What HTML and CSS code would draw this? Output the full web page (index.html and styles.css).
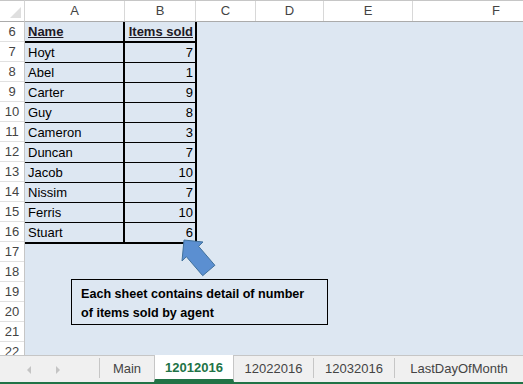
FILE: index.html
```html
<!DOCTYPE html>
<html lang="en">
<head>
  <meta charset="UTF-8">
  <title>12012016 - Items sold</title>
  <link rel="stylesheet" href="styles.css">
</head>
<body>
  <div class="sheet">
    <div class="grid">
      <div class="corner"><span class="corner-tri"></span></div>

      <div class="col-heads">
        <div class="ch col-a">A</div>
        <div class="ch col-b">B</div>
        <div class="ch col-c">C</div>
        <div class="ch col-d">D</div>
        <div class="ch col-e">E</div>
        <div class="ch col-f">F</div>
      </div>

      <div class="row-heads">
        <div class="rh">6</div>
        <div class="rh">7</div>
        <div class="rh">8</div>
        <div class="rh">9</div>
        <div class="rh">10</div>
        <div class="rh">11</div>
        <div class="rh">12</div>
        <div class="rh">13</div>
        <div class="rh">14</div>
        <div class="rh">15</div>
        <div class="rh">16</div>
        <div class="rh">17</div>
        <div class="rh">18</div>
        <div class="rh">19</div>
        <div class="rh">20</div>
        <div class="rh">21</div>
        <div class="rh">22</div>
      </div>

      <div class="cells">
        <div class="data">
          <div class="dr head"><div class="ca">Name</div><div class="cb">Items sold</div></div>
          <div class="dr"><div class="ca">Hoyt</div><div class="cb">7</div></div>
          <div class="dr"><div class="ca">Abel</div><div class="cb">1</div></div>
          <div class="dr"><div class="ca">Carter</div><div class="cb">9</div></div>
          <div class="dr"><div class="ca">Guy</div><div class="cb">8</div></div>
          <div class="dr"><div class="ca">Cameron</div><div class="cb">3</div></div>
          <div class="dr"><div class="ca">Duncan</div><div class="cb">7</div></div>
          <div class="dr"><div class="ca">Jacob</div><div class="cb">10</div></div>
          <div class="dr"><div class="ca">Nissim</div><div class="cb">7</div></div>
          <div class="dr"><div class="ca">Ferris</div><div class="cb">10</div></div>
          <div class="dr last"><div class="ca">Stuart</div><div class="cb">6</div></div>
        </div>

        <!-- callout shapes floating over the sheet -->
        <svg class="arrow" width="40" height="42" viewBox="0 0 40 42">
          <polygon points="4,3 23,5 18.6,9.3 34.9,28.3 22.7,38.7 6.4,19.7 2,24" fill="#5b8fd1" stroke="#41719c" stroke-width="1"/>
        </svg>
        <div class="note">Each sheet contains detail of number<br>of items sold by agent</div>
      </div>
    </div>

    <div class="tabs">
      <div class="tab-nav">
        <span class="nav-left"></span>
        <span class="nav-right"></span>
      </div>
      <div class="tab tab-main">Main</div>
      <div class="tab active">12012016</div>
      <div class="tab tab-b">12022016</div>
      <div class="tab tab-c">12032016</div>
      <div class="tab tab-d">LastDayOfMonth</div>
    </div>
  </div>
</body>
</html>
```

FILE: styles.css
```css
body {
  margin: 0;
  font-family: "Liberation Sans", Arial, sans-serif;
  background: #fff;
  color: #000;
}

.sheet {
  width: 523px;
  height: 384px;
  display: flex;
  flex-direction: column;
  overflow: hidden;
}

.grid {
  flex: 1;
  display: grid;
  grid-template-columns: 25px 1fr;
  grid-template-rows: 22px 1fr;
  overflow: hidden;
}

/* headers */
.corner {
  position: relative;
  border-top: 1px solid #c6c6c6;
  border-bottom: 1px solid #ababab;
  border-right: 1px solid #d4d4d4;
  box-sizing: border-box;
}

.corner-tri {
  position: absolute;
  right: 3px;
  bottom: 3px;
  width: 0;
  height: 0;
  border-left: 11px solid transparent;
  border-bottom: 11px solid #dfdfdf;
}

.col-heads {
  display: flex;
  border-top: 1px solid #c6c6c6;
  border-bottom: 1px solid #ababab;
  overflow: hidden;
}

.ch {
  flex: none;
  box-sizing: border-box;
  border-right: 1px solid #d8d8d8;
  text-align: center;
  font-size: 13px;
  line-height: 20px;
  color: #444;
}

.col-a { width: 100px; }
.col-b { width: 71px; }
.col-c { width: 60px; }
.col-d { width: 68px; }
.col-e { width: 89px; }
.col-f { width: 167px; }

.row-heads {
  border-right: 1px solid #c6c6c6;
  overflow: hidden;
}

.rh {
  height: 20px;
  box-sizing: border-box;
  border-bottom: 1px solid #e1e1e1;
  text-align: center;
  font-size: 13px;
  line-height: 20px;
  color: #444;
}

/* cell area */
.cells {
  position: relative;
  background: #dde7f2;
}

.data {
  width: 172px;
  font-size: 13px;
}

.dr {
  display: flex;
  height: 20px;
  box-sizing: border-box;
  border-bottom: 1px solid #000;
  line-height: 20px;
}

.dr.head,
.dr.last {
  height: 21px;
  border-bottom-width: 2px;
}

.ca {
  width: 100px;
  box-sizing: border-box;
  padding-left: 3px;
  border-right: 2px solid #000;
}

.cb {
  width: 72px;
  box-sizing: border-box;
  padding-right: 2px;
  border-right: 2px solid #000;
  text-align: right;
}

.head .ca,
.head .cb {
  font-weight: bold;
  text-decoration: underline;
  color: #1e1a26;
}

.arrow {
  position: absolute;
  left: 155px;
  top: 215px;
}

.note {
  position: absolute;
  left: 46px;
  top: 257px;
  width: 257px;
  height: 46px;
  box-sizing: border-box;
  border: 1px solid #000;
  padding: 5px 0 0 9px;
  font-size: 12.6px;
  font-weight: bold;
  line-height: 19px;
}

/* sheet tabs */
.tabs {
  height: 29px;
  box-sizing: border-box;
  display: flex;
  background: #f0f0f0;
  border-top: 1px solid #c6c6c6;
  border-bottom: 2px solid #217346;
}

.tab-nav {
  width: 100px;
  position: relative;
  border-right: 1px solid #c6c6c6;
  margin: 2px 0 4px;
}

.nav-left,
.nav-right {
  position: absolute;
  top: 8px;
  width: 0;
  height: 0;
  border-top: 4px solid transparent;
  border-bottom: 4px solid transparent;
}

.nav-left {
  left: 27px;
  border-right: 4px solid #c4c4c4;
}

.nav-right {
  left: 56px;
  border-left: 4px solid #c4c4c4;
}

.tab {
  flex: none;
  text-align: center;
  font-size: 13px;
  line-height: 25px;
  color: #444;
}

.tab-main { width: 54px; }
.tab-b { width: 79px; border-right: 1px solid #c6c6c6; margin-bottom: 4px; margin-top: 2px; line-height: 21px; }
.tab-c { width: 80px; border-right: 1px solid #c6c6c6; margin-bottom: 4px; margin-top: 2px; line-height: 21px; }
.tab-d { width: 128px; }

.tab.active {
  width: 80px;
  box-sizing: border-box;
  margin-top: -1px;
  background: #fff;
  border-left: 1px solid #c6c6c6;
  border-right: 1px solid #c6c6c6;
  border-bottom: 3px solid #217346;
  font-weight: bold;
  color: #217346;
  line-height: 25px;
}
```
